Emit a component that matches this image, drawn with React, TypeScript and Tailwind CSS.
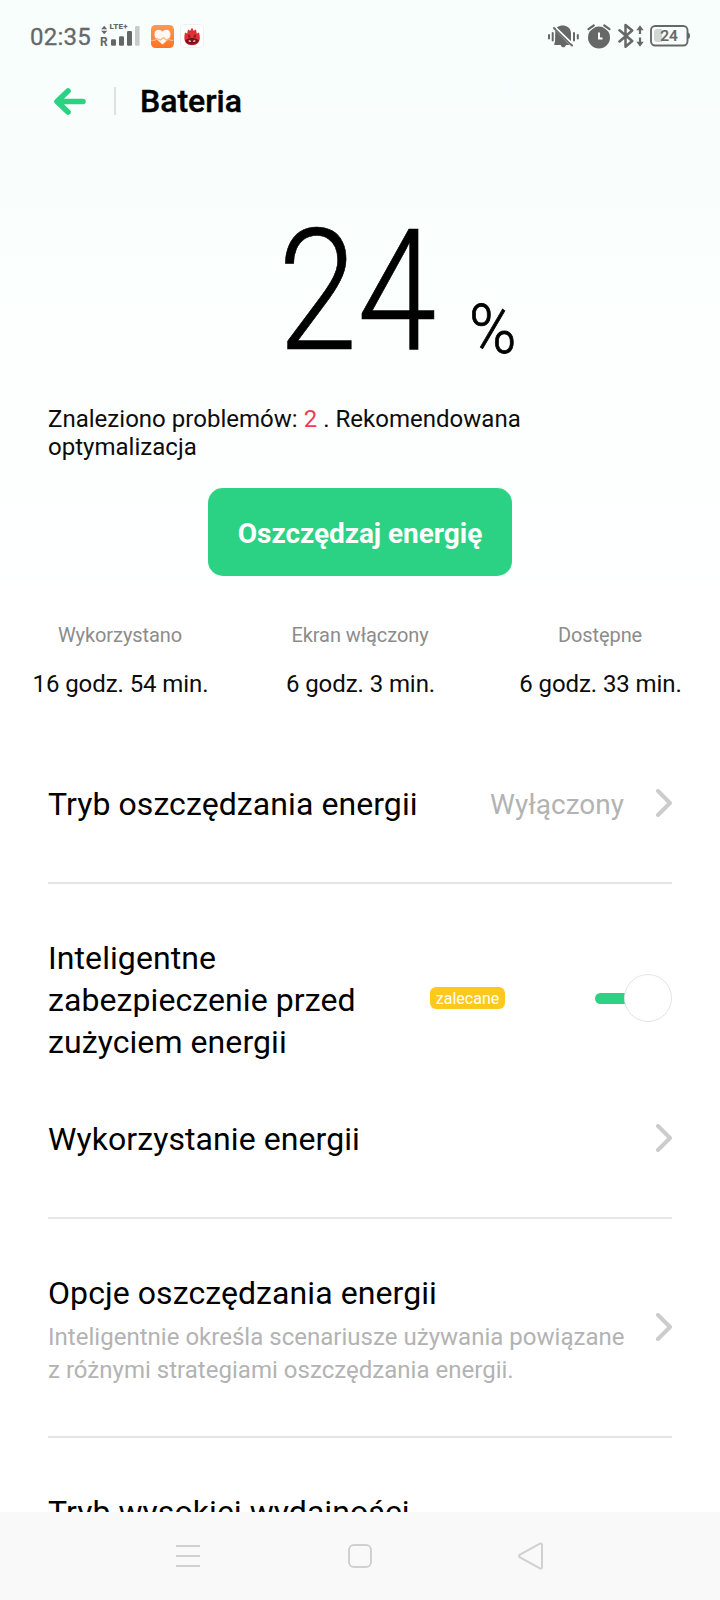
import React from "react";

function SignalIcon() {
  return (
    <svg width="40" height="26" viewBox="0 0 40 26" fill="#666867">
      <path d="M1.2 6.2 4.2 2.7 7.2 6.2zM1.2 7.8 4.2 11.3 7.2 7.8z" />
      <text x="0" y="22.8" fontSize="12" fontWeight="700" fontFamily="Roboto">R</text>
      <text x="9.6" y="5.8" fontSize="8" fontWeight="900" fontFamily="Roboto" letterSpacing="0.2">LTE+</text>
      <rect x="11" y="16.3" width="5" height="6.4" rx="1.2" />
      <rect x="19" y="13.3" width="5" height="9.4" rx="1.2" />
      <rect x="27" y="8" width="5" height="14.7" rx="1.2" />
      <rect x="35" y="3" width="4.6" height="19.7" rx="1.2" fill="#c7cccb" />
    </svg>
  );
}

function HealthIcon() {
  return (
    <svg width="23" height="23" viewBox="0 0 23 23">
      <defs>
        <linearGradient id="health" x1="0" y1="0" x2="0" y2="1">
          <stop offset="0" stopColor="#ff9a55" />
          <stop offset="1" stopColor="#ff7424" />
        </linearGradient>
      </defs>
      <rect width="23" height="23" rx="4.5" fill="url(#health)" />
      <path d="M11.500 19.500 4.800 13.500C2.300 10 3.500 4.800 7.600 4.800c1.800 0 3 .8 3.900 2 .9-1.200 2.100-2 3.900-2 4.100 0 5.300 5.200 2.800 8.700z" fill="#fff8f2" />
      <path d="M0 15.300h3.500l2.500-1.800 3.500 1.500 3-2.500 3 2.800 2-1.600 2 1.600h3" fill="none" stroke="#fbb57a" strokeWidth="1.200" />
    </svg>
  );
}

function FlameIcon() {
  return (
    <svg width="24" height="24" viewBox="0 0 24 24">
      <rect x=".5" y=".5" width="23" height="23" rx="4.500" fill="#fff" stroke="#f0f0f0" />
      <path d="M6 19C3.700 16 4.300 12 5 8.500l2.200 1L8 5.500l2.300 1.300L12 3.500l1.600 3.300L16 5.500l.8 4L19 8.500c.8 3.500 1.800 7.500-1 10.500-3 3-9 3-12 0z" fill="#df3034" />
      <path d="M6.500 15.500c3-2 8-2 11 0l1.300.5c-.5 6-13 6-13.600 0z" fill="#7b1218" />
      <path d="M8.700 16.800l2 .6M15.300 16.800l-2 .6" stroke="#fff" strokeWidth="1.200" />
      <path d="M9 10.500v2.500h1.500M15 10.500v2.500h-1.500" fill="none" stroke="#7b1218" strokeWidth="1.200" />
    </svg>
  );
}

function MutedBellIcon() {
  return (
    <svg width="31" height="25" viewBox="0 0 31 25" fill="#666867">
      <path d="M10.200 2.500C14 .200 22.500 1 23 9v8.200L8.800 3.400z" />
      <path d="M7.300 6.600 21.600 21H18c-.5 1.500-1.400 2.300-2.600 2.300s-2.200-.8-2.700-2.300H6.300v-1.600L7 17.800z" />
      <path d="M6 4 24 21.500" stroke="#666867" strokeWidth="2" strokeLinecap="round" />
      <path d="M8.300 4.200 23.500 19" stroke="#f8fffd" strokeWidth="1.300" />
      <path d="M1 11v3.500M4.700 9v7.500M26 9v7.500M29.800 11v3.500" stroke="#666867" strokeWidth="2" strokeLinecap="round" />
    </svg>
  );
}

function AlarmIcon() {
  return (
    <svg width="24" height="25" viewBox="0 0 24 25">
      <circle cx="12" cy="13.500" r="11" fill="#666867" />
      <path d="M1.500 5.200 6.700 1.500M22.500 5.200 17.300 1.500" stroke="#f8fffd" strokeWidth="4.500" />
      <path d="M1.500 5.200 6.700 1.500M22.500 5.200 17.300 1.500" stroke="#666867" strokeWidth="2.200" strokeLinecap="round" />
      <path d="M12 8.500v6h3.500" fill="none" stroke="#f8fffd" strokeWidth="2" />
    </svg>
  );
}

function BluetoothIcon() {
  return (
    <svg width="26" height="26" viewBox="0 0 26 26" fill="none" stroke="#666867">
      <path d="M1.500 7.200 14.200 18 7.500 23.800V2L14.200 7.500 1.500 18.500" strokeWidth="2.500" strokeLinecap="round" strokeLinejoin="round" />
      <path d="M22 5v6M22 14.500v6" strokeWidth="2.200" />
      <path d="M18.300 7.300 22 2.300 25.700 7.300zM18.300 18.700 22 23.700 25.700 18.700z" fill="#666867" stroke="none" />
    </svg>
  );
}

function BatteryIcon() {
  return (
    <svg width="41" height="22" viewBox="0 0 41 22">
      <rect x="1" y="1" width="36.500" height="19.500" rx="4.200" fill="none" stroke="#666867" strokeWidth="1.900" />
      <path d="M38 7.500c2.800 1 2.800 5.500 0 6.500z" fill="#666867" />
      <path d="M7 4h5v13H7a3 3 0 0 1-3-3V7a3 3 0 0 1 3-3z" fill="#d0d6d4" />
      <text x="19" y="16" fontSize="15.500" fontWeight="500" fontFamily="Roboto" textAnchor="middle" fill="#666867" stroke="#666867" strokeWidth=".2">24</text>
    </svg>
  );
}

function Chevron() {
  return (
    <svg className="shrink-0" width="16" height="28" viewBox="0 0 16 28" fill="none" stroke="#cccccc" strokeWidth="4" strokeLinecap="round" strokeLinejoin="round">
      <path d="M2 2 14 14 2 26" />
    </svg>
  );
}

function StatusBar() {
  return (
    <div className="flex h-[72px] items-center pl-[30px] pr-[29px]">
      <span className="mt-[2px] text-[24px] leading-[28px] tracking-[0.250px] text-[#666867] [-webkit-text-stroke:0.300px_#666867]">02:35</span>
      <div className="ml-[8.500px]"><SignalIcon /></div>
      <div className="ml-[11px]"><HealthIcon /></div>
      <div className="ml-[6px]"><FlameIcon /></div>
      <div className="ml-auto flex items-center">
        <MutedBellIcon />
        <div className="ml-[8px]"><AlarmIcon /></div>
        <div className="ml-[7px]"><BluetoothIcon /></div>
        <div className="ml-[6px]"><BatteryIcon /></div>
      </div>
    </div>
  );
}

function Header() {
  return (
    <div className="flex h-[58px] items-center pl-[54px]">
      <svg width="32" height="27" viewBox="0 0 32 27" fill="none" stroke="#2cd283" strokeWidth="5.600" strokeLinecap="round" strokeLinejoin="round">
        <path d="M14 3 3 13.500 14 24M4 13.500H29" />
      </svg>
      <div className="ml-[28px] h-[28px] w-[2px] bg-[#dde2e1]" />
      <h1 className="ml-[24px] text-[32px] font-medium leading-[38px] text-black [-webkit-text-stroke:0.400px_black]">Bateria</h1>
    </div>
  );
}

function Stat({ label, value }: { label: string; value: string }) {
  return (
    <div className="flex flex-col items-center">
      <span className="text-[20px] leading-[24px] tracking-[-0.080px] text-[#8c8c8c]">{label}</span>
      <span className="mt-[23px] pl-[1px] text-[24px] leading-[28px] tracking-[-0.080px] text-[#0c0c0c]">{value}</span>
    </div>
  );
}

const titleClass = "text-[32px] leading-[42px] tracking-[0.080px] text-black";

export default function App() {
  return (
    <div className="flex h-[1600px] w-[720px] flex-col overflow-hidden bg-white bg-[linear-gradient(180deg,#f7fefc_0px,#ffffff_620px)] font-['Roboto',sans-serif]">
      <StatusBar />
      <Header />
      <main className="flex min-h-0 flex-1 flex-col overflow-hidden">
        <div className="flex h-[275px] shrink-0 items-end pb-[29px] pl-[278px] text-black">
          <span className="w-[160px] origin-bottom-left scale-x-[0.850] text-[168px] font-light leading-[169px] [-webkit-text-stroke:0.700px_black]">24</span>
          <span className="-mb-[2px] ml-[31px] origin-bottom-left scale-x-[0.930] text-[69px] font-light leading-[96px] [-webkit-text-stroke:0.800px_black]">%</span>
        </div>
        <p className="ml-[48px] w-[500px] shrink-0 text-[24px] leading-[28px] tracking-[0.020px] text-[#0c0c0c]">
          Znaleziono problemów: <span className="text-[#f23c50]">2</span> . Rekomendowana optymalizacja
        </p>
        <button className="mt-[27px] h-[88px] w-[304px] shrink-0 self-center rounded-[15px] bg-[#2cd283] pt-[3px] text-[28px] font-bold leading-[34px] tracking-[-0.040px] text-white">
          Oszczędzaj energię
        </button>
        <div className="mt-[47px] grid shrink-0 grid-cols-3">
          <Stat label="Wykorzystano" value="16 godz. 54 min." />
          <Stat label="Ekran włączony" value="6 godz. 3 min." />
          <Stat label="Dostępne" value="6 godz. 33 min." />
        </div>
        <div className="mx-[48px] mt-[24px] flex h-[162px] shrink-0 items-center border-b-2 border-[#e6e6e6] pt-[2px]">
          <span className={`${titleClass} pt-[2px]`}>Tryb oszczędzania energii</span>
          <span className="ml-auto mr-[32px] pt-[3px] text-[28px] leading-[34px] text-[#b3b3b3]">Wyłączony</span>
          <Chevron />
        </div>
        <div className="mx-[48px] mt-[53px] flex h-[126px] shrink-0 items-center">
          <span className={`${titleClass} w-[340px]`}>Inteligentne zabezpieczenie przed zużyciem energii</span>
          <span className="mb-[4px] ml-[42px] flex h-[22px] w-[75px] items-center justify-center rounded-[6px] bg-[#ffc81c] pt-[2px] text-[16px] leading-[20px] text-white">zalecane</span>
          <div className="mb-[4px] ml-auto flex items-center">
            <div className="-mr-[6px] h-[11px] w-[35px] rounded-l-full bg-[#2cd283]" />
            <div className="z-10 size-[48px] rounded-full border border-[#e4e4e4] bg-white" />
          </div>
        </div>
        <div className="mx-[48px] flex h-[156px] shrink-0 items-center justify-between border-b-2 border-[#e6e6e6] pb-[4px]">
          <span className={`${titleClass} pt-[1px] tracking-[0.020px]`}>Wykorzystanie energii</span>
          <Chevron />
        </div>
        <div className="mx-[48px] flex h-[219px] shrink-0 items-center justify-between border-b-2 border-[#e6e6e6] pb-[2px]">
          <div className="pt-[6px]">
            <div className={titleClass}>Opcje oszczędzania energii</div>
            <p className="mt-[7px] w-[590px] text-[24px] leading-[33px] tracking-[0.020px] text-[#b3b3b3]">
              Inteligentnie określa scenariusze używania powiązane<br />z różnymi strategiami oszczędzania energii.
            </p>
          </div>
          <Chevron />
        </div>
        <div className={`${titleClass} mx-[48px] mt-[53px] shrink-0`}>Tryb wysokiej wydajności</div>
      </main>
      <nav className="flex h-[88px] shrink-0 items-center bg-[#f9f9f9] pl-[176px]">
        <svg width="368" height="30" viewBox="0 0 368 30" fill="none" stroke="#d0d0d0" strokeWidth="2">
          <path d="M0 5h24M0 15h24M0 25h24" />
          <rect x="173" y="4" width="22" height="22" rx="5" />
          <path d="M363.500 2.800 344 13.500q-2 1.500 0 3l19.500 10.700q2.500 1 2.500-1.500V4.300q0-2.500-2.500-1.500z" />
        </svg>
      </nav>
    </div>
  );
}
